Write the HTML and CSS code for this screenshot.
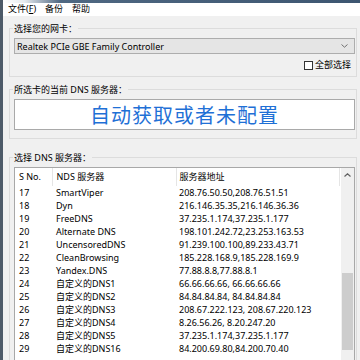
FILE: index.html
```html
<!DOCTYPE html>
<html lang="zh-CN">
<head>
    <meta charset="UTF-8">
    <meta name="viewport" content="width=device-width, initial-scale=1.0">
    <title>DNS 切换</title>
    <link rel="stylesheet" href="styles.css">
</head>
<body>
    <div class="window">
        <div class="title-edge"></div>

        <!-- Menu bar -->
        <div class="menubar">
            <span>文件(<u>F</u>)</span>
            <span>备份</span>
            <span>帮助</span>
        </div>

        <div class="client">
            <!-- Adapter selection -->
            <fieldset class="group">
                <legend>选择您的网卡：</legend>
                <div class="combo">
                    <span>Realtek PCIe GBE Family Controller</span>
                    <svg class="combo-arrow" width="7" height="4" viewBox="0 0 7 4">
                        <path d="M0.5 0.5 L3.5 3.2 L6.5 0.5" fill="none" stroke="#707070" stroke-width="1"/>
                    </svg>
                </div>
                <label class="check-row"><span class="checkbox"></span>全部选择</label>
            </fieldset>

            <!-- Current DNS of the selected adapter -->
            <fieldset class="group group-current">
                <legend>所选卡的当前 DNS 服务器：</legend>
                <div class="current-dns">自动获取或者未配置</div>
            </fieldset>

            <!-- DNS server list -->
            <fieldset class="group group-list">
                <legend>选择 DNS 服务器：</legend>
                <div class="listview">
                    <div class="list-main">
                        <table class="dns-table">
                            <colgroup>
                                <col class="col-no">
                                <col class="col-name">
                                <col class="col-addr">
                            </colgroup>
                            <thead>
                                <tr><th>S No.</th><th>NDS 服务器</th><th>服务器地址</th></tr>
                            </thead>
                            <tbody>
                                <tr><td>17</td><td>SmartViper</td><td>208.76.50.50,208.76.51.51</td></tr>
                                <tr><td>18</td><td>Dyn</td><td>216.146.35.35,216.146.36.36</td></tr>
                                <tr><td>19</td><td>FreeDNS</td><td>37.235.1.174,37.235.1.177</td></tr>
                                <tr><td>20</td><td>Alternate DNS</td><td>198.101.242.72,23.253.163.53</td></tr>
                                <tr><td>21</td><td>UncensoredDNS</td><td>91.239.100.100,89.233.43.71</td></tr>
                                <tr><td>22</td><td>CleanBrowsing</td><td>185.228.168.9,185.228.169.9</td></tr>
                                <tr><td>23</td><td>Yandex.DNS</td><td>77.88.8.8,77.88.8.1</td></tr>
                                <tr><td>24</td><td>自定义的DNS1</td><td>66.66.66.66, 66.66.66.66</td></tr>
                                <tr><td>25</td><td>自定义的DNS2</td><td>84.84.84.84, 84.84.84.84</td></tr>
                                <tr><td>26</td><td>自定义的DNS3</td><td>208.67.222.123, 208.67.220.123</td></tr>
                                <tr><td>27</td><td>自定义的DNS4</td><td>8.26.56.26, 8.20.247.20</td></tr>
                                <tr><td>28</td><td>自定义的DNS5</td><td>37.235.1.174,37.235.1.177</td></tr>
                                <tr><td>29</td><td>自定义的DNS16</td><td>84.200.69.80,84.200.70.40</td></tr>
                            </tbody>
                        </table>
                    </div>

                    <!-- Vertical scrollbar -->
                    <div class="scrollbar">
                        <div class="scroll-btn">
                            <svg width="7" height="4" viewBox="0 0 7 4">
                                <path d="M0.5 3.5 L3.5 0.8 L6.5 3.5" fill="none" stroke="#606060" stroke-width="1.2"/>
                            </svg>
                        </div>
                        <div class="scroll-track">
                            <div class="scroll-thumb"></div>
                        </div>
                        <div class="scroll-btn">
                            <svg width="7" height="4" viewBox="0 0 7 4">
                                <path d="M0.5 0.5 L3.5 3.2 L6.5 0.5" fill="none" stroke="#606060" stroke-width="1.2"/>
                            </svg>
                        </div>
                    </div>
                </div>
            </fieldset>
        </div>
    </div>
</body>
</html>
```

FILE: styles.css
```css
html, body {
    margin: 0;
    width: 360px;
    height: 360px;
    overflow: hidden;
}

body {
    font-family: "Noto Sans", "Noto Sans CJK SC", sans-serif;
    font-size: 9px;
    color: #000;
    background-color: #f0f0f0;
}

/* Window frame */
.window {
    display: flex;
    flex-direction: column;
    height: 360px;
    border-left: 3px solid #4d5a68;
    box-sizing: border-box;
    overflow: hidden;
}

.title-edge {
    flex: none;
    height: 3px;
    background: linear-gradient(to right, #ffffff 0, #e6eaee 6%, #4f6882 16%, #3d5671 100%);
}

/* Menu bar */
.menubar {
    flex: none;
    display: flex;
    gap: 9px;
    height: 13px;
    line-height: 12px;
    padding-left: 5px;
    background-color: #fff;
}

.menubar u {
    text-decoration: underline;
}

/* Dialog area */
.client {
    flex: 1;
    display: flex;
    flex-direction: column;
    padding: 7px 3px 0 6px;
    min-height: 0;
}

/* Group boxes */
.group {
    margin: 0;
    padding: 0 1px 6px 4px;
    border: 1px solid #dcdcdc;
    min-width: 0;
}

.group legend {
    padding: 0 1px;
    margin-left: -1px;
    line-height: 11px;
}

.group-current {
    margin-top: 7px;
    padding-bottom: 8px;
}

.group-list {
    flex: 1;
    margin-top: 13px;
    padding-bottom: 0;
    border-bottom: none;
    min-height: 0;
    overflow: hidden;
}

/* Combo box */
.combo {
    display: flex;
    align-items: center;
    justify-content: space-between;
    height: 14px;
    margin-top: 4px;
    padding: 0 6px 0 2px;
    border: 1px solid #adadad;
    background-color: #e5e5e5;
}

.combo-arrow {
    display: block;
}

/* Check box */
.check-row {
    display: flex;
    align-items: center;
    justify-content: flex-end;
    gap: 2px;
    height: 10px;
    margin-top: 6px;
    margin-right: 4px;
    line-height: 10px;
    font-size: 9px;
}

.checkbox {
    width: 7px;
    height: 7px;
    border: 1px solid #333;
    background-color: #fff;
}

/* Current DNS box */
.current-dns {
    height: 29px;
    margin-top: 4px;
    border: 1px solid #a9a9a9;
    background-color: #fff;
    color: #1f70d6;
    font-family: "Noto Sans CJK SC", sans-serif;
    font-size: 20px;
    letter-spacing: 1px;
    line-height: 29px;
    text-align: center;
}

/* List view */
.listview {
    display: flex;
    height: 210px;
    margin-top: 4px;
    border: 1px solid #a8a8a8;
    background-color: #fff;
}

.list-main {
    flex: 1;
    overflow: hidden;
}

.dns-table {
    width: 324px;
    table-layout: fixed;
    border-collapse: collapse;
}

.col-no {
    width: 37px;
}

.col-name {
    width: 124px;
}

.col-addr {
    width: 163px;
}

.dns-table th {
    height: 18px;
    padding: 0 0 0 4px;
    font-weight: normal;
    text-align: left;
    border-right: 1px solid #e5e5e5;
    line-height: 18px;
}

.dns-table td {
    height: 13px;
    padding: 0 0 0 4px;
    line-height: 13px;
    white-space: nowrap;
}

.dns-table th:nth-child(3) {
    padding-left: 3px;
}

.dns-table td:nth-child(3) {
    padding-left: 3px;
}

/* Scrollbar */
.scrollbar {
    display: flex;
    flex-direction: column;
    width: 13px;
    background-color: #f0f0f0;
}

.scroll-btn {
    display: flex;
    align-items: center;
    justify-content: center;
    height: 14px;
}

.scroll-btn svg {
    display: block;
}

.scroll-track {
    flex: 1;
}

.scroll-thumb {
    height: 77px;
    margin: 91px 1px 0 1px;
    background-color: #cdcdcd;
}
```
